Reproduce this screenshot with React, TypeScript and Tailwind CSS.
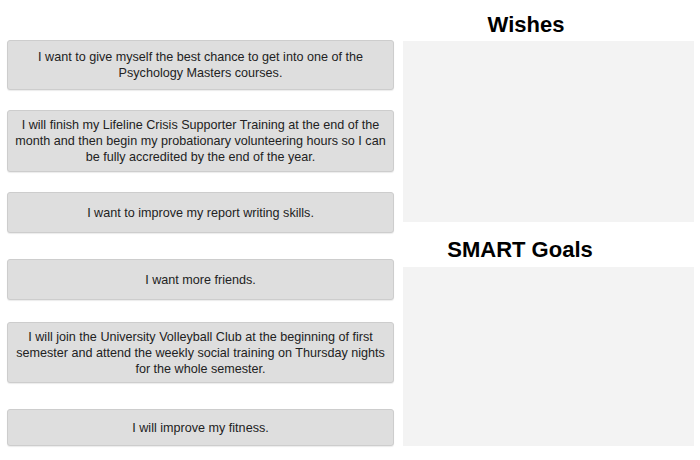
import React from "react";

function Card({ lines, className }: { lines: string[]; className: string }) {
  return (
    <div
      className={
        "flex items-center justify-center rounded-[3px] border border-[#cdcdcd] bg-[#dedede] px-1 text-center text-[12.6px] leading-[16px] text-[#222] shadow-[0_1px_1px_rgba(0,0,0,0.08)] " +
        className
      }
    >
      <div className="whitespace-nowrap">
        {lines.map((l, i) => (
          <div key={i}>{l}</div>
        ))}
      </div>
    </div>
  );
}

export default function App() {
  return (
    <div
      className="flex h-[460px] w-[700px] overflow-hidden bg-white"
      style={{ fontFamily: '"Liberation Sans", Arial, sans-serif' }}
    >
      <div className="flex w-[394px] shrink-0 flex-col pl-[7px] pt-[40px]">
        <Card
          className="h-[50px]"
          lines={["I want to give myself the best chance to get into one of the", "Psychology Masters courses."]}
        />
        <Card
          className="mt-[20px] h-[62px]"
          lines={[
            "I will finish my Lifeline Crisis Supporter Training at the end of the",
            "month and then begin my probationary volunteering hours so I can",
            "be fully accredited by the end of the year.",
          ]}
        />
        <Card className="mt-[20px] h-[41px]" lines={["I want to improve my report writing skills."]} />
        <Card className="mt-[26px] h-[41px]" lines={["I want more friends."]} />
        <Card
          className="mt-[22px] h-[61px]"
          lines={[
            "I will join the University Volleyball Club at the beginning of first",
            "semester and attend the weekly social training on Thursday nights",
            "for the whole semester.",
          ]}
        />
        <Card className="mt-[26px] h-[37px]" lines={["I will improve my fitness."]} />
      </div>
      <div className="ml-[9px] flex w-[291px] shrink-0 flex-col">
        <div className="h-[41px] pr-[45px] pt-[12px] text-center text-[22px] font-bold leading-[25px] text-black">
          Wishes
        </div>
        <div className="h-[181px] bg-[#f3f3f3]" />
        <div className="h-[45px] pr-[57px] pt-[15px] text-center text-[22px] font-bold leading-[25px] text-black">
          SMART Goals
        </div>
        <div className="h-[179px] bg-[#f3f3f3]" />
      </div>
    </div>
  );
}
